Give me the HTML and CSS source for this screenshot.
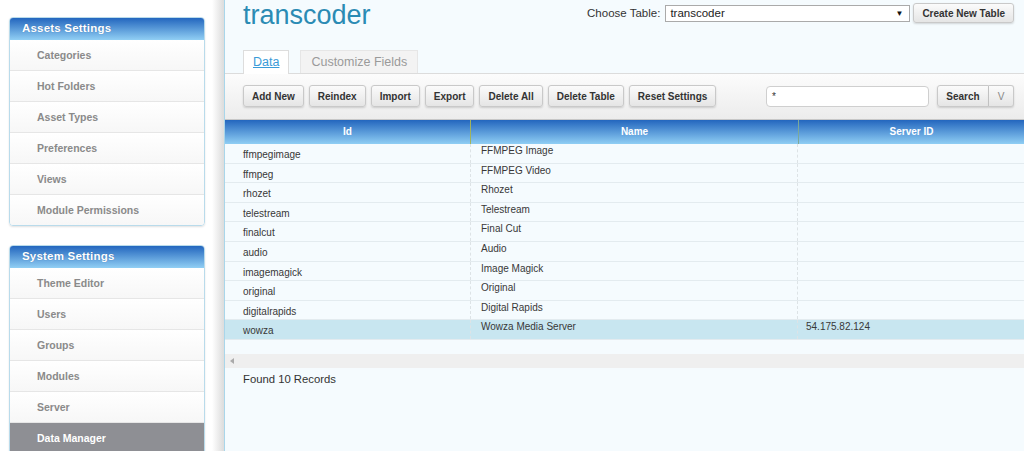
FILE: index.html
```html
<!DOCTYPE html>
<html lang="en">
<head>
  <meta charset="UTF-8" />
  <title>Data Manager</title>
  <link rel="stylesheet" href="styles.css">
</head>
<body>

<div class="sidebar">
  <div class="panel">
    <div class="panel-head">Assets Settings</div>
    <div class="item">Categories</div>
    <div class="item">Hot Folders</div>
    <div class="item">Asset Types</div>
    <div class="item">Preferences</div>
    <div class="item">Views</div>
    <div class="item">Module Permissions</div>
  </div>

  <div class="panel">
    <div class="panel-head">System Settings</div>
    <div class="item">Theme Editor</div>
    <div class="item">Users</div>
    <div class="item">Groups</div>
    <div class="item">Modules</div>
    <div class="item">Server</div>
    <div class="item active">Data Manager</div>
  </div>
</div>

<div class="main">
  <div class="topbar">
    <h1 class="title">transcoder</h1>
    <div class="picker">
      <span class="picker-label">Choose Table:</span>
      <div class="select">transcoder<span class="arrow">&#9660;</span></div>
      <button class="btn">Create New Table</button>
    </div>
  </div>

  <div class="tabs">
    <div class="tab active"><a href="#">Data</a></div>
    <div class="tab">Customize Fields</div>
  </div>

  <div class="toolbar">
    <button class="btn">Add New</button>
    <button class="btn">Reindex</button>
    <button class="btn">Import</button>
    <button class="btn">Export</button>
    <button class="btn">Delete All</button>
    <button class="btn">Delete Table</button>
    <button class="btn">Reset Settings</button>

    <div class="search">
      <div class="search-box">*</div>
      <div class="btn-group">
        <button class="btn">Search</button>
        <button class="btn more">V</button>
      </div>
    </div>
  </div>

  <div class="grid-head">
    <div class="col c-id">Id</div>
    <div class="col c-name">Name</div>
    <div class="col c-server">Server ID</div>
  </div>

  <div class="rows">
    <div class="row"><div class="cell c-id">ffmpegimage</div><div class="cell c-name">FFMPEG Image</div><div class="cell c-server"></div></div>
    <div class="row"><div class="cell c-id">ffmpeg</div><div class="cell c-name">FFMPEG Video</div><div class="cell c-server"></div></div>
    <div class="row"><div class="cell c-id">rhozet</div><div class="cell c-name">Rhozet</div><div class="cell c-server"></div></div>
    <div class="row"><div class="cell c-id">telestream</div><div class="cell c-name">Telestream</div><div class="cell c-server"></div></div>
    <div class="row"><div class="cell c-id">finalcut</div><div class="cell c-name">Final Cut</div><div class="cell c-server"></div></div>
    <div class="row"><div class="cell c-id">audio</div><div class="cell c-name">Audio</div><div class="cell c-server"></div></div>
    <div class="row"><div class="cell c-id">imagemagick</div><div class="cell c-name">Image Magick</div><div class="cell c-server"></div></div>
    <div class="row"><div class="cell c-id">original</div><div class="cell c-name">Original</div><div class="cell c-server"></div></div>
    <div class="row"><div class="cell c-id">digitalrapids</div><div class="cell c-name">Digital Rapids</div><div class="cell c-server"></div></div>
    <div class="row selected"><div class="cell c-id">wowza</div><div class="cell c-name">Wowza Media Server</div><div class="cell c-server">54.175.82.124</div></div>
  </div>

  <div class="scrollbar"><span class="scroll-left"></span></div>

  <div class="found">Found 10 Records</div>
</div>

</body>
</html>
```

FILE: styles.css
```css
body {
  margin: 0;
  padding: 0;
  display: flex;
  height: 451px;
  overflow: hidden;
  background: white;
  font-family: "Liberation Sans", Arial, sans-serif;
  color: #333;
}

/* sidebar */

.sidebar {
  width: 224px;
  flex: none;
  box-sizing: border-box;
  padding: 17px 0 0 9px;
  background: linear-gradient(to right, #fff 212px, #dedede 223px);
}

.panel {
  width: 196px;
  box-sizing: border-box;
  border: 1px solid #b9dbeb;
  border-radius: 4px;
  margin-bottom: 19px;
  overflow: hidden;
  box-shadow: 0 1px 2px rgba(0, 0, 0, 0.12);
}

.panel-head {
  height: 22px;
  line-height: 21px;
  padding-left: 12px;
  background: linear-gradient(#2366be, #91cff4);
  color: white;
  font-size: 11.5px;
  font-weight: bold;
  letter-spacing: 0.2px;
  text-shadow: 0 0 1px rgba(0, 40, 100, 0.4);
}

.item {
  height: 30px;
  line-height: 30px;
  padding-left: 27px;
  border-bottom: 1px solid #e6e6e6;
  background: linear-gradient(#fff, #f7f7f7);
  color: #8a8a8a;
  font-size: 10.5px;
  font-weight: bold;
}

.item:last-child {
  border-bottom: none;
}

.item.active {
  background: #8e8f94;
  color: white;
  height: 40px;
}

/* main */

.main {
  flex: 1;
  display: flex;
  flex-direction: column;
  background: #f5fbfe;
  border-left: 1px solid #a9d6ea;
}

.topbar {
  display: flex;
  justify-content: space-between;
  height: 50px;
  padding: 0 10px 0 18px;
}

.title {
  margin: 0;
  font-size: 27px;
  line-height: 30px;
  font-weight: normal;
  color: #2b8bb4;
}

.picker {
  display: flex;
  align-items: center;
  height: 20px;
  margin-top: 3px;
  font-size: 11.5px;
}

.picker-label {
  color: #333;
  margin-right: 5px;
}

.select {
  position: relative;
  width: 239px;
  height: 15px;
  line-height: 15px;
  padding-left: 4px;
  border: 1px solid #aaa;
  background: white;
  color: #222;
  margin-right: 3px;
}

.select .arrow {
  position: absolute;
  right: 6px;
  top: 0;
  font-size: 8px;
  color: #111;
}

.btn {
  height: 22px;
  padding: 0 8px;
  border: 1px solid #c9c9c9;
  border-radius: 3px;
  background: linear-gradient(#fbfbfb, #e5e5e5);
  box-shadow: 0 1px 2px rgba(0, 0, 0, 0.15);
  font-family: "Liberation Sans", Arial, sans-serif;
  font-size: 10px;
  font-weight: bold;
  color: #333;
}

.picker .btn {
  height: 20px;
}

/* tabs */

.tabs {
  display: flex;
  gap: 11px;
  padding-left: 18px;
  border-bottom: 1px solid #dcdcdc;
}

.tab {
  height: 22px;
  line-height: 23px;
  padding: 0 10px;
  margin-bottom: -1px;
  border: 1px solid #e6e6e6;
  border-bottom: none;
  background: #f3f3f3;
  color: #9a9a9a;
  font-size: 12.5px;
}

.tab.active {
  padding: 0 9px;
  background: white;
  border-color: #ddd;
  height: 23px;
}

.tab a {
  color: #3a9bd8;
}

/* toolbar */

.toolbar {
  display: flex;
  align-items: flex-start;
  gap: 5px;
  height: 45px;
  box-sizing: border-box;
  padding: 11px 10px 0 18px;
  background: linear-gradient(#fcfcfc, #ececec);
}

.search {
  display: flex;
  margin-left: auto;
  gap: 8px;
}

.search-box {
  width: 156px;
  height: 19px;
  margin-top: 1px;
  padding-left: 5px;
  line-height: 19px;
  border: 1px solid #cfcfcf;
  border-radius: 4px;
  background: white;
  font-size: 10px;
}

.btn-group {
  display: flex;
}

.btn-group .btn:first-child {
  border-radius: 3px 0 0 3px;
  width: 52px;
}

.btn-group .btn.more {
  border-radius: 0 3px 3px 0;
  border-left: none;
  width: 25px;
  padding: 0;
  font-weight: normal;
  color: #888;
}

/* grid */

.grid-head {
  display: flex;
  height: 25px;
  border-top: 1px solid #c7c7c7;
  box-sizing: border-box;
  background: linear-gradient(#2366be, #8fcef4);
}

.col {
  line-height: 24px;
  text-align: center;
  color: white;
  font-size: 10px;
  font-weight: bold;
}

.c-id {
  width: 245px;
}

.c-name {
  width: 327px;
}

.c-server {
  flex: 1;
}

.grid-head .c-name {
  border-left: 1px solid #a2b35c;
}

.grid-head .c-server {
  border-left: 1px solid #7ba99a;
}

.rows {
  font-size: 10px;
}

.row {
  display: flex;
  height: 19.6px;
  box-sizing: border-box;
  border-bottom: 1px solid #e3ebef;
}

.row.selected {
  background: #c8e6f0;
}

.cell {
  color: #383838;
}

.cell.c-id {
  padding-left: 18px;
  line-height: 21px;
  box-sizing: border-box;
}

.cell.c-name {
  padding-left: 10px;
  line-height: 14px;
  box-sizing: border-box;
  border-left: 1px dashed #dde3e6;
}

.cell.c-server {
  padding-left: 8px;
  line-height: 14px;
  border-left: 1px dashed #dde3e6;
}

.scrollbar {
  position: relative;
  height: 14px;
  margin-top: 14px;
  background: #efefef;
}

.scroll-left {
  position: absolute;
  left: 5px;
  top: 4px;
  border-right: 4px solid #aaa;
  border-top: 3px solid transparent;
  border-bottom: 3px solid transparent;
}

.found {
  padding: 5px 0 0 18px;
  font-size: 11.3px;
  color: #333;
}
```
